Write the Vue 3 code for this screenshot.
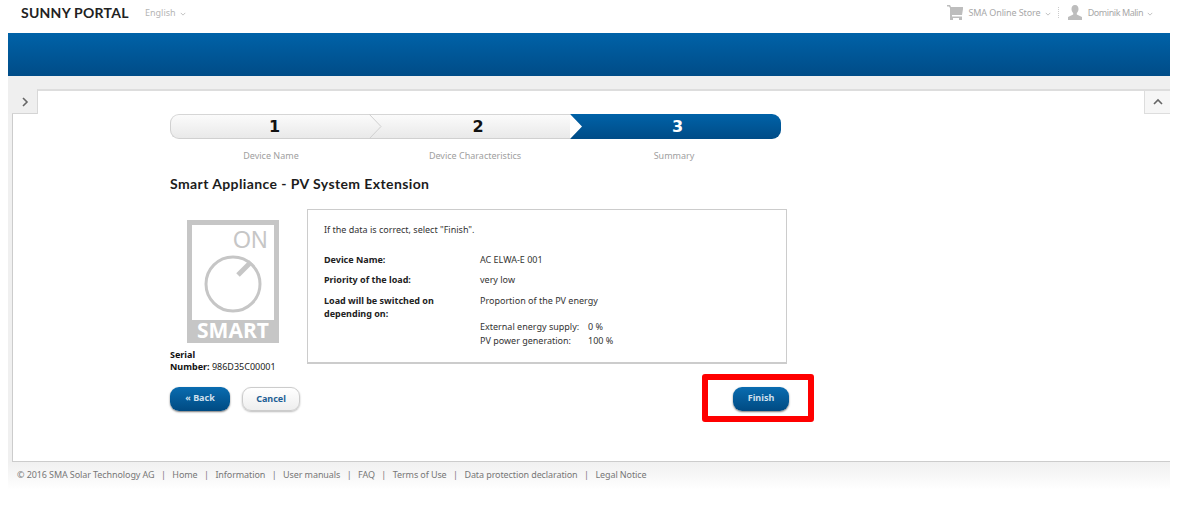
<script setup>
const rows = [
  { label: 'Device Name:', value: 'AC ELWA-E 001' },
  { label: 'Priority of the load:', value: 'very low' }
]
const links = ['Home', 'Information', 'User manuals', 'FAQ', 'Terms of Use', 'Data protection declaration', 'Legal Notice']
</script>

<template>
  <div class="page">
    <header class="top">
      <div class="brand">SUNNY PORTAL</div>
      <div class="lang">English <svg class="caret" viewBox="0 0 8 5"><path d="M1 1l3 3 3-3" /></svg></div>
      <div class="spacer"></div>
      <svg class="cart" viewBox="0 0 16 15"><path d="M0 0h3l1 2h12v2l-1 6H5v1.500h10V13H3V3L2 1.500H0z" /><rect x="3" y="13" width="3" height="2" /><rect x="12" y="13" width="3" height="2" /></svg>
      <span class="toplink">SMA Online Store <svg class="caret" viewBox="0 0 8 5"><path d="M1 1l3 3 3-3" /></svg></span>
      <span class="dots"></span>
      <svg class="user" viewBox="0 0 16 15"><path d="M8 0c2.500 0 3.500 1.800 3.500 4 0 1.800-.8 3.200-1.700 4v1.500L15 12v3H1v-3l5.200-2.500V8C5.300 7.200 4.500 5.800 4.500 4 4.500 1.800 5.500 0 8 0z" /></svg>
      <span class="toplink name">Dominik Malin <svg class="caret" viewBox="0 0 8 5"><path d="M1 1l3 3 3-3" /></svg></span>
    </header>

    <div class="shell">
      <div class="bluebar"></div>
      <div class="gap"></div>
      <div class="tabs">
        <div class="tab-left"><svg viewBox="0 0 8 10"><path d="M2 1l4 4-4 4" /></svg></div>
        <div class="tab-mid"></div>
        <div class="tab-right"><svg viewBox="0 0 12 8"><path d="M2 6l4-4 4 4" /></svg></div>
      </div>
      <main class="panel">
        <div class="wizard">
          <div class="steps">
            <div class="step s1"><span>1</span>
              <svg class="sep" viewBox="0 0 13 25"><path d="M0 0l12 12.500L0 25" /></svg>
            </div>
            <div class="step s2"><span>2</span></div>
            <div class="step active"><span>3</span></div>
          </div>
          <div class="captions">
            <span>Device Name</span>
            <span>Device Characteristics</span>
            <span>Summary</span>
          </div>
          <h1 class="title">Smart Appliance - PV System Extension</h1>
          <div class="body">
            <div class="side">
              <svg class="smart" viewBox="0 0 92 123">
                <rect x="2.500" y="2.500" width="87" height="118" fill="#fff" stroke="#c6c6c6" stroke-width="5" />
                <rect x="0" y="100" width="92" height="23" fill="#c6c6c6" />
                <text x="46" y="28" class="on">ON</text>
                <circle cx="46" cy="64" r="27" fill="none" stroke="#c6c6c6" stroke-width="3" />
                <path d="M51 55l13-13" stroke="#c6c6c6" stroke-width="5" fill="none" />
                <text x="46" y="118" class="smarttext">SMART</text>
              </svg>
              <div class="serial"><b>Serial<br />Number:</b> 986D35C00001</div>
            </div>
            <section class="box">
              <p class="intro">If the data is correct, select "Finish".</p>
              <div v-for="r in rows" :key="r.label" class="row">
                <b>{{ r.label }}</b>
                <span>{{ r.value }}</span>
              </div>
              <div class="row last">
                <b>Load will be switched on<br />depending on:</b>
                <div>
                  <div class="prop">Proportion of the PV energy</div>
                  <div class="split"><span class="k">External energy supply:</span><span>0 %</span></div>
                  <div class="split"><span class="k">PV power generation:</span><span>100 %</span></div>
                </div>
              </div>
            </section>
          </div>
          <div class="actions">
            <button class="btn blue back">« Back</button>
            <button class="btn light">Cancel</button>
            <div class="spacer"></div>
            <div class="finish-wrap">
              <button class="btn blue finish">Finish</button>
              <div class="redbox"></div>
            </div>
          </div>
        </div>
      </main>
      <footer class="foot">
        <span>© 2016 SMA Solar Technology AG</span>
        <template v-for="l in links" :key="l"><i>|</i><span>{{ l }}</span></template>
      </footer>
    </div>
  </div>
</template>

<style scoped>
.page {
  width: 1190px;
  height: 509px;
  overflow: hidden;
  background: #fff;
  font-family: "Noto Sans", "DejaVu Sans", sans-serif;
  font-size: 9px;
  color: #333;
}
.top {
  height: 33px;
  box-sizing: border-box;
  padding: 0 37px 8px 21px;
  display: flex;
  align-items: center;
  color: #aaa;
}
.brand {
  font-family: Lato, sans-serif;
  font-weight: 700;
  font-size: 14px;
  letter-spacing: .25px;
  color: #222;
  width: 124px;
}
.lang { font-size: 9px; color: #b5b5b5; }
.spacer { flex: 1; }
.caret { width: 6px; height: 4px; margin-left: 2px; vertical-align: middle; }
.caret path { fill: none; stroke: #bbb; stroke-width: 1.200; }
.cart { width: 16px; height: 15px; fill: #bdbdbd; margin-right: 5px; }
.toplink { font-size: 9px; color: #a8a8a8; letter-spacing: -.1px; }
.toplink.name { letter-spacing: -.45px; }
.dots { width: 0; height: 11px; border-left: 1px dotted #ccc; margin: 0 8px 0 7px; }
.user { width: 16px; height: 15px; fill: #bdbdbd; margin-right: 5px; }
.shell { margin: 0 20px 0 8px; background: #f0f0f0; }
.bluebar {
  height: 43px;
  background: linear-gradient(#0062a8, #004c87);
}
.gap { height: 13px; background: #efefef; }
.tabs { display: flex; height: 25px; }
.tab-left {
  width: 29px;
  background: linear-gradient(#d4d4d4, #d4d4d4) 4px 100% / 100% 1px no-repeat, #efefef;
  display: flex;
  align-items: center;
  padding-left: 13px;
  box-sizing: border-box;
}
.tab-left svg { width: 8px; height: 10px; }
.tab-left path, .tab-right path { fill: none; stroke: #666; stroke-width: 1.600; }
.tab-mid {
  flex: 1;
  background: #fff;
  border-top: 2px solid #ddd;
  border-left: 1px solid #d8d8d8;
}
.tab-right {
  width: 26px;
  box-sizing: border-box;
  background: #f6f6f6;
  border-left: 1px solid #ddd;
  border-top: 2px solid #ddd;
  border-bottom: 1px solid #ddd;
  display: flex;
  align-items: center;
  justify-content: center;
}
.tab-right svg { width: 12px; height: 8px; }
.panel {
  margin-left: 4px;
  height: 348px;
  box-sizing: border-box;
  background: #fff;
  border-left: 1px solid #ccc;
  border-bottom: 1px solid #ccc;
  padding-left: 157px;
}
.wizard { width: 619px; }
.steps {
  width: 611px;
  height: 25px;
  box-sizing: border-box;
  display: grid;
  grid-template-columns: 200px 200px 211px;
  position: relative;
}
.step {
  position: relative;
  box-sizing: border-box;
  background: linear-gradient(#fbfbfb, #e9e9e9);
  border-top: 1px solid #d6d6d6;
  border-bottom: 1px solid #d0d0d0;
  display: flex;
  align-items: center;
  justify-content: center;
  font-family: "DejaVu Sans", sans-serif;
  font-weight: 700;
  font-size: 16px;
  color: #111;
}
.s1 {
  padding-left: 8px;
  border-left: 1px solid #d0d0d0;
  border-radius: 9px 0 0 9px;
}
.s2 { padding-left: 16px; }
.step .sep { position: absolute; right: -12px; top: -1px; width: 13px; height: 25px; z-index: 1; }
.sep path { fill: none; stroke: #d0d0d0; }
.step.active {
  padding-left: 4px;
  background: linear-gradient(#0062a8, #004c87);
  border: 0;
  color: #fff;
  border-radius: 0 9px 9px 0;
  clip-path: polygon(0 0, 100% 0, 100% 100%, 0 100%, 12px 50%);
}
.captions {
  width: 600px;
  display: grid;
  grid-template-columns: 202px 206px 192px;
  margin-top: 10px;
  height: 13px;
  line-height: 13px;
  font-size: 9px;
  color: #a0a0a0;
  text-align: center;
}
.title {
  margin: 12px 0 0;
  height: 20px;
  line-height: 20px;
  font-family: Lato, sans-serif;
  font-weight: 700;
  font-size: 14px;
  letter-spacing: .4px;
  color: #1c1c1c;
}
.body { display: flex; margin-top: 15px; }
.side { width: 137px; flex: none; padding-top: 11px; }
.smart { display: block; width: 92px; height: 123px; margin-left: 17px; }
.on { font: 400 23px "Liberation Sans", sans-serif; fill: #c6c6c6; }
.smarttext { font: 700 21px "Open Sans", sans-serif; fill: #fff; text-anchor: middle; }
.serial {
  margin-top: 6px;
  width: 115px;
  line-height: 12px;
  font-size: 9px;
  color: #222;
}
.serial b { color: #111; }
.box {
  width: 480px;
  height: 155px;
  box-sizing: border-box;
  border: 1px solid #ccc;
  border-bottom-width: 2px;
  padding: 13px 16px;
  color: #333;
  line-height: 13px;
}
.intro { margin: 0 0 17px; }
.row { display: flex; min-height: 13px; margin-bottom: 7px; }
.row.last { margin-top: 8px; }
.row b { width: 156px; flex: none; color: #222; }
.prop { margin-bottom: 13px; }
.split { display: flex; height: 14px; }
.k { width: 108px; }
.actions { display: flex; margin-top: 14px; align-items: flex-start; }
.btn {
  height: 24px;
  border-radius: 9px;
  font-family: "Noto Sans", sans-serif;
  font-weight: 700;
  font-size: 9px;
  line-height: 22px;
  padding: 0 0 2px;
  border: 0;
}
.blue {
  background: linear-gradient(#0a6cb0, #004a82);
  color: #cfe0ee;
  box-shadow: 0 1px 2px #777;
}
.back { width: 60px; }
.finish { width: 56px; display: block; }
.light {
  width: 58px;
  margin-left: 12px;
  background: linear-gradient(#fff, #eee);
  color: #1d5f95;
  border: 1px solid #ccc;
  box-shadow: 0 1px 2px #bbb;
}
.finish-wrap { position: relative; }
.redbox {
  position: absolute;
  left: -31px;
  top: -13px;
  width: 112px;
  height: 48px;
  box-sizing: border-box;
  border: 6px solid #f00;
  border-radius: 3px;
}
.foot {
  height: 28px;
  box-sizing: border-box;
  padding: 0 0 4px 9px;
  display: flex;
  align-items: center;
  gap: 6px;
  font-size: 9px;
  letter-spacing: -.1px;
  color: #777;
  background: linear-gradient(#f0f0f0, #fff);
}
.foot i { font-style: normal; color: #777; padding: 0 .5px; }
</style>
